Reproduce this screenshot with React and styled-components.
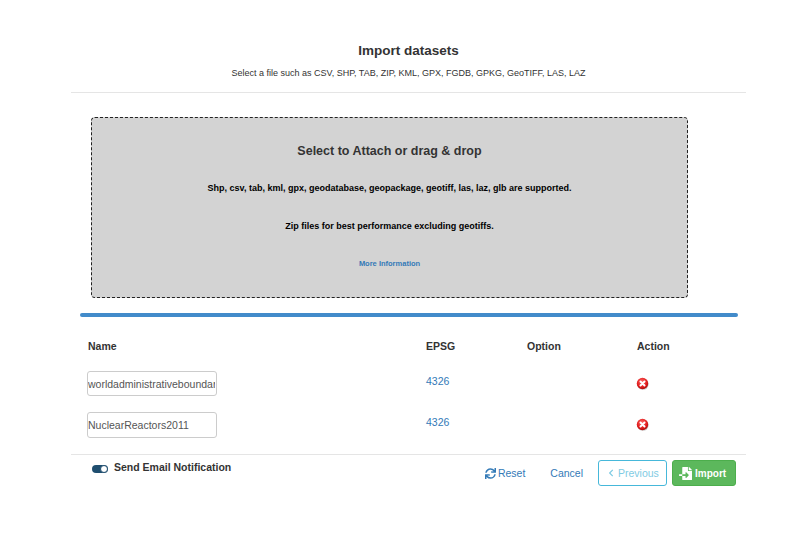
import React from "react";
import styled, { createGlobalStyle } from "styled-components";
import { FaSync, FaChevronLeft, FaFileImport } from "react-icons/fa";

const GlobalStyle = createGlobalStyle`
  html, body {
    margin: 0;
    padding: 0;
    background: #fff;
    font-family: "Liberation Sans", Arial, sans-serif;
    color: #333;
  }
`;

const Page = styled.div`
  width: 800px;
  height: 536px;
  overflow: hidden;
  box-sizing: border-box;
  padding: 41px 54px 0 71px;
`;

const Header = styled.header`
  height: 52px;
  box-sizing: border-box;
  border-bottom: 1px solid #e5e5e5;
  text-align: center;
  padding-top: 1px;
`;

const Title = styled.h4`
  margin: 0 0 6px;
  font-size: 13.5px;
  line-height: 18px;
  font-weight: 700;
  color: #333;
`;

const Subtitle = styled.p`
  margin: 0;
  font-size: 9px;
  line-height: 14px;
  color: #333;
`;

const DropZone = styled.section`
  box-sizing: border-box;
  width: 597px;
  height: 181px;
  margin: 24px 0 0 20px;
  border: 1px dashed #222;
  border-radius: 4px;
  background: #d3d3d3;
  text-align: center;
  padding-top: 24px;
`;

const DropTitle = styled.h5`
  margin: 0 0 22px;
  font-size: 12.5px;
  line-height: 18px;
  font-weight: 700;
  color: #333;
`;

const DropText = styled.p`
  margin: 0 0 25px;
  font-size: 9px;
  line-height: 13px;
  font-weight: 700;
  color: #000;
`;

const MoreLink = styled.a`
  display: block;
  margin-top: 24px;
  font-size: 7.5px;
  line-height: 11px;
  font-weight: 700;
  color: #337ab7;
  text-decoration: none;
`;

const ProgressBar = styled.div`
  width: 658px;
  height: 4px;
  margin: 15px 0 0 9px;
  border-radius: 2px;
  background: #428bca;
`;

const Table = styled.div`
  display: grid;
  grid-template-columns: 338px 101px 110px 1fr;
  margin: 22px 0 0 17px;
  align-items: start;
  font-size: 10.5px;
`;

const HeadCell = styled.div`
  height: 32px;
  line-height: 14px;
  font-weight: 700;
  color: #333;
`;

const NameCell = styled.div`
  height: 41px;
`;

const NameInput = styled.input`
  display: block;
  box-sizing: border-box;
  width: 130px;
  height: ${(p) => p.$h}px;
  margin-left: -1px;
  padding: 0 1px 0 0;
  border: 1px solid #ccc;
  border-radius: 3px;
  outline: none;
  background: #fff;
  font-family: inherit;
  font-size: 10.5px;
  color: #555;
`;

const EpsgLink = styled.a`
  display: block;
  margin-top: 3px;
  line-height: 14px;
  color: #337ab7;
  text-decoration: none;
`;

const RemoveCell = styled.div`
  padding-top: 6px;
  margin-left: -1px;
`;

const RemoveIcon = styled.svg`
  display: block;
  width: 13px;
  height: 13px;
`;

const Footer = styled.footer`
  display: flex;
  align-items: flex-start;
  justify-content: space-between;
  height: 40px;
  box-sizing: border-box;
  margin-top: 1px;
  border-top: 1px solid #e5e5e5;
  padding: 5px 10px 0 21px;
`;

const NotifyRow = styled.label`
  display: flex;
  align-items: center;
  gap: 6px;
  font-size: 10.5px;
  line-height: 14px;
  font-weight: 700;
  color: #333;
`;

const Toggle = styled.span`
  display: block;
  position: relative;
  width: 16px;
  height: 8px;
  margin-top: 3px;
  border-radius: 4px;
  background: #1f4e6f;

  &::after {
    content: "";
    position: absolute;
    right: 0;
    top: 0;
    width: 8px;
    height: 8px;
    box-sizing: border-box;
    border: 1px solid #1f4e6f;
    border-radius: 50%;
    background: #fff;
  }
`;

const Actions = styled.div`
  display: flex;
  align-items: center;
  font-size: 10.5px;
`;

const LinkButton = styled.button`
  display: flex;
  align-items: center;
  gap: 2px;
  height: 26px;
  padding: 0;
  margin-right: ${(p) => p.$gap}px;
  border: 0;
  background: none;
  font: inherit;
  color: #337ab7;
`;

const OutlineButton = styled.button`
  display: flex;
  align-items: center;
  gap: 3px;
  box-sizing: border-box;
  height: 26px;
  width: 69px;
  padding: 0 0 0 8px;
  margin-right: 5px;
  border: 1px solid #46b8da;
  border-radius: 3px;
  background: #fff;
  font: inherit;
  color: #7fcbe3;
`;

const SuccessButton = styled.button`
  display: flex;
  align-items: center;
  gap: 3px;
  box-sizing: border-box;
  height: 26px;
  width: 64px;
  padding: 0 0 0 6px;
  border: 1px solid #4cae4c;
  border-radius: 3px;
  background: #5cb85c;
  font: inherit;
  font-size: 10px;
  font-weight: 700;
  color: #fff;
`;

const rows = [
  { name: "worldadministrativeboundaries", epsg: "4326", h: 25 },
  { name: "NuclearReactors2011", epsg: "4326", h: 26 },
];

function CrossIcon() {
  return (
    <RemoveIcon viewBox="0 0 16 16">
      <defs>
        <radialGradient id="redBall" cx="45%" cy="35%" r="65%">
          <stop offset="0%" stopColor="#ff6a6a" />
          <stop offset="70%" stopColor="#e01b1b" />
          <stop offset="100%" stopColor="#a80d0d" />
        </radialGradient>
      </defs>
      <circle cx="8.6" cy="8.8" r="7" fill="#999" opacity="0.5" />
      <circle cx="8" cy="8" r="7" fill="url(#redBall)" />
      <path d="M5.5 5.5l5 5M10.5 5.5l-5 5" stroke="#fff" strokeWidth="2.4" strokeLinecap="round" />
    </RemoveIcon>
  );
}

export default function App() {
  return (
    <>
      <GlobalStyle />
      <Page>
        <Header>
          <Title>Import datasets</Title>
          <Subtitle>Select a file such as CSV, SHP, TAB, ZIP, KML, GPX, FGDB, GPKG, GeoTIFF, LAS, LAZ</Subtitle>
        </Header>

        <DropZone>
          <DropTitle>Select to Attach or drag &amp; drop</DropTitle>
          <DropText>Shp, csv, tab, kml, gpx, geodatabase, geopackage, geotiff, las, laz, glb are supported.</DropText>
          <DropText>Zip files for best performance excluding geotiffs.</DropText>
          <MoreLink href="#">More Information</MoreLink>
        </DropZone>

        <ProgressBar />

        <Table>
          <HeadCell>Name</HeadCell>
          <HeadCell>EPSG</HeadCell>
          <HeadCell>Option</HeadCell>
          <HeadCell>Action</HeadCell>
          {rows.map((row) => (
            <React.Fragment key={row.name}>
              <NameCell>
                <NameInput readOnly value={row.name} $h={row.h} />
              </NameCell>
              <EpsgLink href="#">{row.epsg}</EpsgLink>
              <div />
              <RemoveCell>
                <CrossIcon />
              </RemoveCell>
            </React.Fragment>
          ))}
        </Table>

        <Footer>
          <NotifyRow>
            <Toggle />
            Send Email Notification
          </NotifyRow>
          <Actions>
            <LinkButton $gap={25}>
              <FaSync size={11} />
              Reset
            </LinkButton>
            <LinkButton $gap={15}>Cancel</LinkButton>
            <OutlineButton>
              <FaChevronLeft size={8} />
              Previous
            </OutlineButton>
            <SuccessButton>
              <FaFileImport size={13} />
              Import
            </SuccessButton>
          </Actions>
        </Footer>
      </Page>
    </>
  );
}
